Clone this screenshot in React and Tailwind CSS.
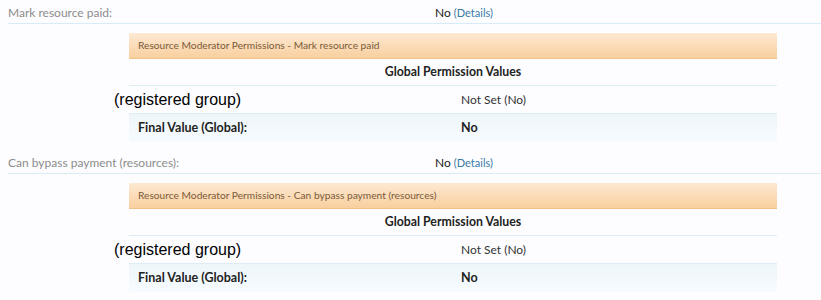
const font = { fontFamily: "Lato, 'Open Sans', sans-serif" };

function PermBlock({ label, title }) {
    return (
        <div className="h-[150px]">
            <div className="flex h-[24px] items-center border-b border-[#d7ecf7] ml-[8px] text-[12px] pt-[2px]">
                <div className="w-[427px] text-[#8c8c8c]">{label}</div>
                <div className="text-[#222]">
                    No <span className="text-[11px] text-[#3a7aa6]">(Details)</span>
                </div>
            </div>
            <div className="ml-[129px] w-[648px] mt-[9px]">
                <div className="h-[26px] flex items-center pl-[9px] text-[10.2px] text-[#7a5a3a] bg-gradient-to-b from-[#fde9d2] to-[#f9cf9e] border-b border-[#f1c18c]">
                    {title}
                </div>
                <div className="h-[27px] flex items-center justify-center font-bold text-[12.3px] text-[#222] border-b border-[#ddedf5]">
                    Global Permission Values
                </div>
                <div className="h-[28px] flex items-center border-b border-[#ddedf5]">
                    <div className="w-[322px]">
                        <span className="block -ml-[15px] text-[16px] text-black" style={{ fontFamily: "'Liberation Sans', Arial, sans-serif" }}>(registered group)</span>
                    </div>
                    <div className="pl-[10px] text-[12px] text-[#333]">Not Set (No)</div>
                </div>
                <div className="h-[28px] flex items-center bg-gradient-to-b from-[#eef6fb] to-[#f6fbfe] font-bold text-[12.5px] text-[#222]">
                    <div className="w-[322px] pl-[9px]">Final Value (Global):</div>
                    <div className="pl-[10px]">No</div>
                </div>
            </div>
        </div>
    );
}

export default function App() {
    return (
        <div className="w-[821px] h-[300px] bg-[#fdfdff] overflow-hidden" style={font}>
            <PermBlock label="Mark resource paid:" title="Resource Moderator Permissions - Mark resource paid" />
            <PermBlock label="Can bypass payment (resources):" title="Resource Moderator Permissions - Can bypass payment (resources)" />
        </div>
    );
}
